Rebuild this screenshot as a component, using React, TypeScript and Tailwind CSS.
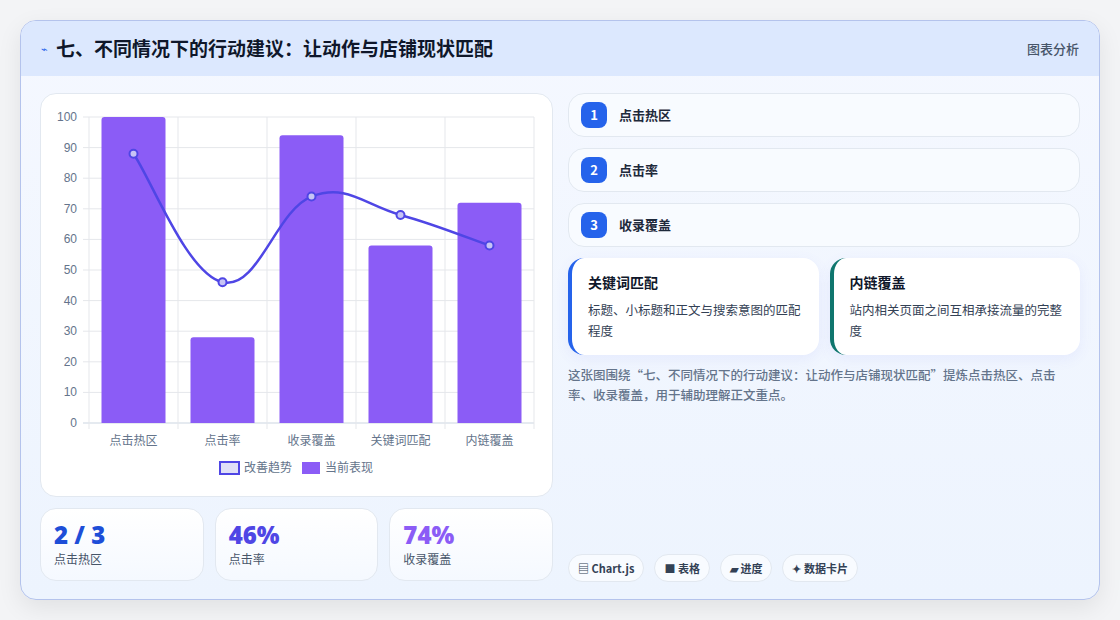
import React from "react";

const cats = ["点击热区", "点击率", "收录覆盖", "关键词匹配", "内链覆盖"];
const bars = [100, 28, 94, 58, 72];
const line = [88, 46, 74, 68, 58];
const X0 = 48, CW = 89, Y0 = 329, YT = 23;
const yv = (v: number) => Y0 - ((Y0 - YT) * v) / 100;
const cx = (i: number) => X0 + CW * i + CW / 2;

function curve() {
  const p = line.map((v, i) => [cx(i), yv(v)]);
  let d = `M${p[0][0]},${p[0][1]}`;
  for (let i = 0; i < p.length - 1; i++) {
    const p0 = p[i - 1] || p[i], p1 = p[i], p2 = p[i + 1], p3 = p[i + 2] || p2;
    const t = 0.4 / 1;
    const c1 = [p1[0] + ((p2[0] - p0[0]) * t) / 2, p1[1] + ((p2[1] - p0[1]) * t) / 2];
    const c2 = [p2[0] - ((p3[0] - p1[0]) * t) / 2, p2[1] - ((p3[1] - p1[1]) * t) / 2];
    d += ` C${c1[0]},${c1[1]} ${c2[0]},${c2[1]} ${p2[0]},${p2[1]}`;
  }
  return d;
}

function Chart() {
  return (
    <svg width="512" height="403" style={{ fontFamily: "'Noto Sans CJK SC', sans-serif" }}>
      {Array.from({ length: 11 }).map((_, k) => (
        <g key={k}>
          <line x1={X0 - 6} x2={X0 + CW * 5} y1={yv(k * 10)} y2={yv(k * 10)} stroke={k === 0 ? "#cbd5e1" : "#e5e7eb"} />
          <text x={36} y={yv(k * 10) + 4} textAnchor="end" fontSize="12" fill="#64748b" fontFamily="'Liberation Sans', sans-serif">{k * 10}</text>
        </g>
      ))}
      {Array.from({ length: 6 }).map((_, i) => (
        <line key={i} x1={X0 + CW * i} x2={X0 + CW * i} y1={YT} y2={Y0 + 6} stroke="#e5e7eb" />
      ))}
      {bars.map((v, i) => (
        <path key={i} d={`M${cx(i) - 32},${Y0} V${yv(v) + 3} Q${cx(i) - 32},${yv(v)} ${cx(i) - 29},${yv(v)} H${cx(i) + 29} Q${cx(i) + 32},${yv(v)} ${cx(i) + 32},${yv(v) + 3} V${Y0} Z`} fill="#8b5cf6" />
      ))}
      <path d={curve()} fill="none" stroke="#4f46e5" strokeWidth="2.5" />
      {line.map((v, i) => (
        <circle key={i} cx={cx(i)} cy={yv(v)} r="4" fill="#c7c4f5" stroke="#4f46e5" strokeWidth="2" />
      ))}
      {cats.map((c, i) => (
        <text key={c} x={cx(i)} y={351} textAnchor="middle" fontSize="12" fill="#64748b">{c}</text>
      ))}
      <rect x={179} y={368} width={19} height={12} fill="#e0e0f7" stroke="#4f46e5" strokeWidth="2" />
      <text x={203} y={378} fontSize="12" fill="#64748b">改善趋势</text>
      <rect x={261} y={368} width={18} height={12} fill="#8b5cf6" />
      <text x={284} y={378} fontSize="12" fill="#64748b">当前表现</text>
    </svg>
  );
}

export default function App() {
  const font = { fontFamily: "'Noto Sans CJK SC', 'Noto Sans', sans-serif" };
  return (
    <div className="w-[1120px] h-[620px] bg-[#f3f4f6] p-5" style={font}>
      <div className="h-[580px] rounded-2xl border border-[#b4c3ec] overflow-hidden bg-gradient-to-b from-[#f5f8ff] to-[#edf4fe] shadow-[0_8px_24px_rgba(0,0,0,0.08)] flex flex-col">
        <div className="h-[55px] shrink-0 bg-[#dce8fe] flex items-center justify-between px-5">
          <div className="flex items-center gap-2">
            <span className="text-[#2563eb] text-[11px]">⌁</span>
            <span className="text-[19px] font-bold text-[#0f172a]">七、不同情况下的行动建议：让动作与店铺现状匹配</span>
          </div>
          <span className="text-[13px] text-[#475569] font-medium">图表分析</span>
        </div>
        <div className="flex gap-[15px] px-[19px] pt-[17px]">
          <div className="w-[513px] flex flex-col gap-[11px]">
            <div className="h-[404px] bg-white rounded-2xl border border-[#e2e8f0]">
              <Chart />
            </div>
            <div className="grid grid-cols-3 gap-[11px]">
              {[
                ["2 / 3", "点击热区", "text-[#1d4ed8]"],
                ["46%", "点击率", "text-[#4f46e5]"],
                ["74%", "收录覆盖", "text-[#8b5cf6]"],
              ].map(([v, l, c]) => (
                <div key={l} className="h-[73px] rounded-2xl border border-[#e2e8f0] bg-gradient-to-b from-white to-[#f5f9ff] px-[13px] pt-[10px]">
                  <div className={`text-[24px] leading-[32px] font-extrabold ${c}`} style={{ fontFamily: "'Open Sans', sans-serif" }}>{v}</div>
                  <div className="text-[12px] text-[#475569] leading-4">{l}</div>
                </div>
              ))}
            </div>
          </div>
          <div className="w-[514px] flex flex-col">
            {["点击热区", "点击率", "收录覆盖"].map((t, i) => (
              <div key={t} className="h-[44px] mb-[11px] rounded-2xl border border-[#e2e8f0] bg-[#f8fbff] flex items-center px-3 gap-3">
                <span className="w-[26px] h-[26px] rounded-lg bg-[#2563eb] text-white text-[13px] font-bold flex items-center justify-center">{i + 1}</span>
                <span className="text-[13px] font-semibold text-[#1e293b]">{t}</span>
              </div>
            ))}
            <div className="grid grid-cols-2 gap-[11px]">
              {[
                ["关键词匹配", "标题、小标题和正文与搜索意图的匹配程度", "border-[#2563eb]"],
                ["内链覆盖", "站内相关页面之间互相承接流量的完整度", "border-[#0f766e]"],
              ].map(([t, d, b]) => (
                <div key={t} className={`h-[97px] rounded-2xl bg-white border-l-4 ${b} shadow-[0_4px_14px_rgba(99,102,241,0.08)] pl-[16px] pr-4 pt-[14px]`}>
                  <div className="text-[14px] font-semibold text-[#0f172a] leading-5">{t}</div>
                  <div className="text-[12.5px] text-[#334155] leading-[21px] mt-[7px]">{d}</div>
                </div>
              ))}
            </div>
            <p className="mt-[10px] text-[12.5px] leading-[20px] text-[#64748b] font-medium">
              这张图围绕“七、不同情况下的行动建议：让动作与店铺现状匹配”提炼点击热区、点击率、收录覆盖，用于辅助理解正文重点。
            </p>
            <div className="mt-auto flex gap-[10px] mb-[-1px] pb-0">
              {["▤ Chart.js", "■ 表格", "▰ 进度", "✦ 数据卡片"].map((c) => (
                <span key={c} className="h-[28px] px-[9px] rounded-full border border-[#e2e8f0] bg-[#f8fbff] text-[11px] font-semibold text-[#334155] flex items-center">{c}</span>
              ))}
            </div>
          </div>
        </div>
      </div>
    </div>
  );
}
